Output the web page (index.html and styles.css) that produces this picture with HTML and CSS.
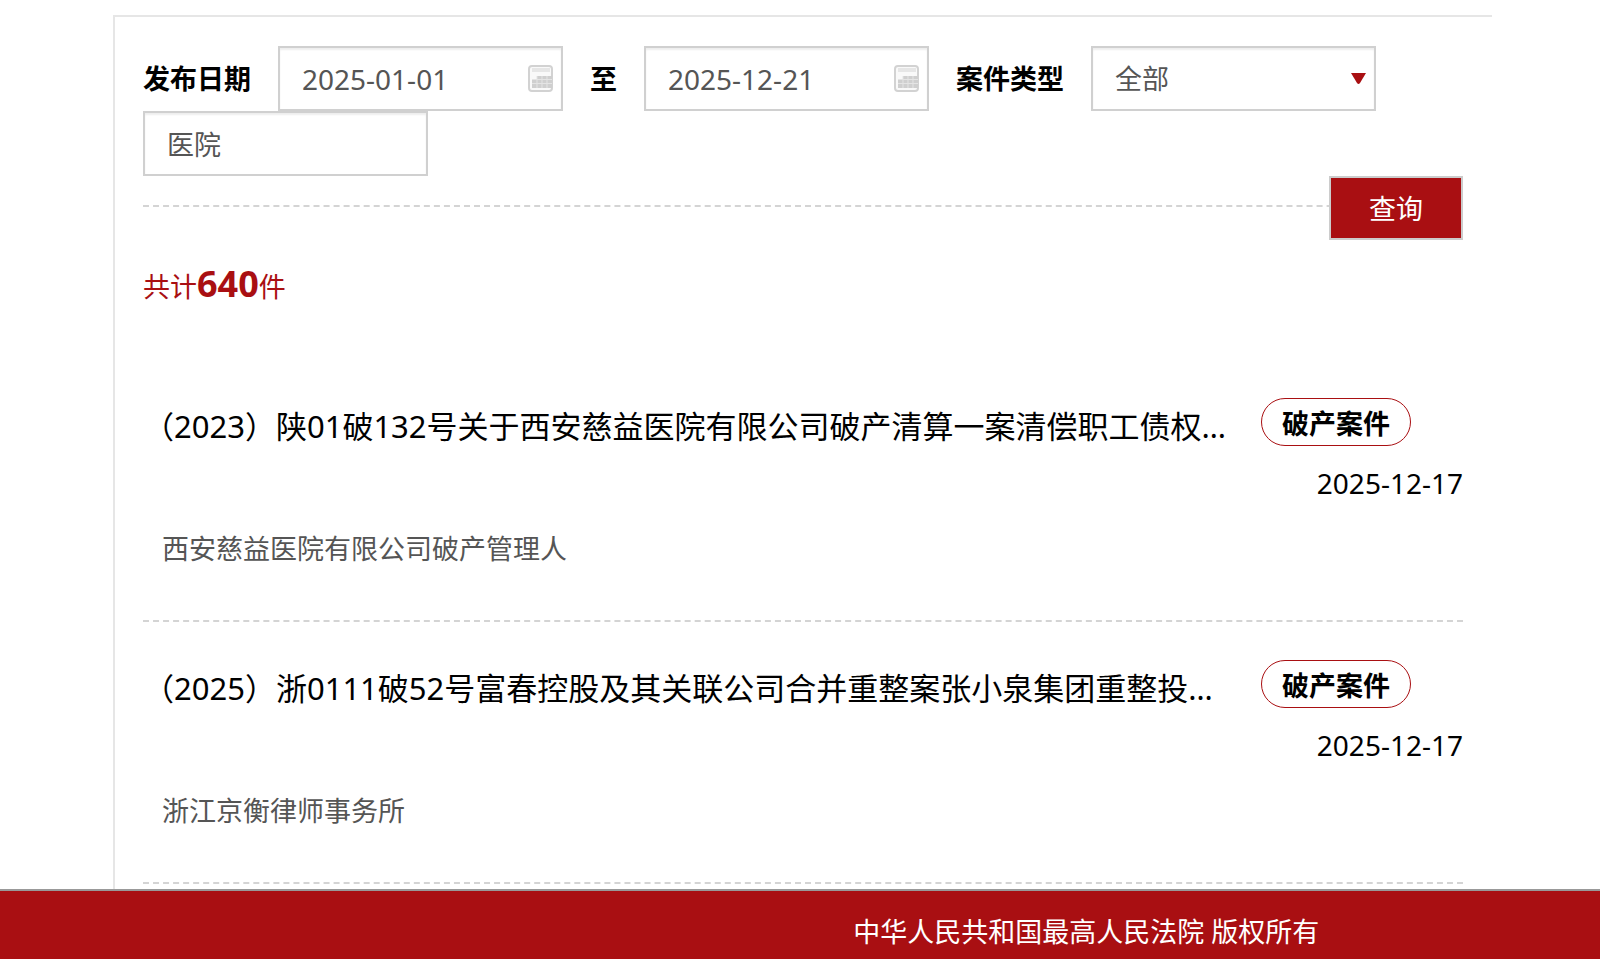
FILE: index.html
```html
<!DOCTYPE html>
<html lang="zh-CN">
<head>
<meta charset="utf-8">
<title>公开案件</title>
<link rel="stylesheet" href="styles.css">
</head>
<body>
<main class="panel">
  <form class="filters">
    <label class="label" for="from">发布日期</label>
    <div class="field">
      <input class="control date-control" id="from" type="text" value="2025-01-01">
      <svg class="calendar" viewBox="0 0 25 27" aria-hidden="true">
        <rect x="1" y="1" width="23" height="25" rx="3" fill="#f9f9f9" stroke="#d2d2d2" stroke-width="2"/>
        <path d="M4 3H22V7H4Z" fill="#e6e6e6"/>
        <path d="M9 11H24V23H4V15H9Z" fill="#cfcfcf"/>
        <path d="M4 14.500H24M4 18.500H24M9 11V23M14 11V23M19 11V23" stroke="#e4e4e4"/>
      </svg>
    </div>
    <label class="label" for="to">至</label>
    <div class="field">
      <input class="control date-control" id="to" type="text" value="2025-12-21">
      <svg class="calendar" viewBox="0 0 25 27" aria-hidden="true">
        <rect x="1" y="1" width="23" height="25" rx="3" fill="#f9f9f9" stroke="#d2d2d2" stroke-width="2"/>
        <path d="M4 3H22V7H4Z" fill="#e6e6e6"/>
        <path d="M9 11H24V23H4V15H9Z" fill="#cfcfcf"/>
        <path d="M4 14.500H24M4 18.500H24M9 11V23M14 11V23M19 11V23" stroke="#e4e4e4"/>
      </svg>
    </div>
    <label class="label" for="type">案件类型</label>
    <div class="field">
      <select class="control" id="type"><option>全部</option></select>
      <svg class="arrow" viewBox="0 0 15 12" aria-hidden="true"><path d="M0 0H15L9 10Q7.500 12 6 10Z" fill="#a90f12"/></svg>
    </div>
    <div class="field">
      <input class="control" type="text" value="医院" aria-label="关键字">
    </div>
    <button class="search" type="submit">查询</button>
  </form>

  <p class="total">共计<strong class="count">640</strong>件</p>

  <ul class="list">
    <li class="item">
      <div class="head">
        <a class="title" href="#">（2023）陕01破132号关于西安慈益医院有限公司破产清算一案清偿职工债权…</a>
        <span class="badge">破产案件</span>
      </div>
      <time class="date">2025-12-17</time>
      <p class="agency">西安慈益医院有限公司破产管理人</p>
    </li>
    <li class="item">
      <div class="head">
        <a class="title" href="#">（2025）浙0111破52号富春控股及其关联公司合并重整案张小泉集团重整投…</a>
        <span class="badge">破产案件</span>
      </div>
      <time class="date">2025-12-17</time>
      <p class="agency">浙江京衡律师事务所</p>
    </li>
  </ul>
</main>
<footer class="footer">
  <p class="copyright">中华人民共和国最高人民法院 版权所有</p>
</footer>
</body>
</html>
```

FILE: styles.css
```css
* {
  box-sizing: border-box;
}

body {
  margin: 0;
  min-height: 100vh;
  display: flex;
  flex-direction: column;
  background: #fff;
  color: #000;
  font: 27px/40px "Noto Sans", "Noto Sans CJK SC", sans-serif;
}

p,
ul {
  margin: 0;
  padding: 0;
}

.panel {
  flex: 1;
  margin: 15px 108px 0 113px;
  padding: 29px 29px 0 28px;
  border-top: 2px solid #e6e6e6;
  border-left: 2px solid #e6e6e6;
}

.filters {
  position: relative;
  display: flex;
  flex-wrap: wrap;
  align-items: center;
  column-gap: 27px;
  padding-bottom: 29px;
  border-bottom: 2px dashed #d4d4d4;
}

.label {
  font-weight: 700;
}

.field {
  position: relative;
  width: 285px;
}

.control {
  display: block;
  width: 100%;
  height: 65px;
  padding: 0 22px;
  border: 2px solid #d0d0d0;
  border-radius: 0;
  background: #fff;
  box-shadow: inset 0 2px 2px #eee;
  color: #555;
  font: inherit;
  appearance: none;
  outline: 0;
}

.date-control {
  font-size: 28px;
}

.calendar {
  position: absolute;
  top: 19px;
  right: 10px;
  width: 25px;
  height: 27px;
}

.arrow {
  position: absolute;
  top: 27px;
  right: 10px;
  width: 15px;
  height: 12px;
  pointer-events: none;
}

.search {
  position: absolute;
  right: 0;
  bottom: -35px;
  width: 134px;
  height: 64px;
  padding: 2px 0 0;
  border: 2px solid #ccc;
  background: #a90f12;
  color: #fff;
  font: inherit;
}

.total {
  padding-top: 57px;
  color: #a90f12;
}

.count {
  font-size: 36px;
}

.list {
  padding-top: 53px;
  list-style: none;
}

.item {
  height: 262px;
  padding-top: 38px;
  border-bottom: 2px dashed #d4d4d4;
}

.head {
  display: flex;
  justify-content: space-between;
  align-items: flex-start;
  padding-right: 52px;
}

.title {
  padding-top: 8px;
  color: #000;
  font-size: 31px;
  text-decoration: none;
  white-space: nowrap;
}

.badge {
  height: 48px;
  padding: 4px 20px;
  border: 1px solid #a90f12;
  border-radius: 24px;
  font-weight: 700;
  line-height: 42px;
}

.date {
  display: block;
  padding-top: 17px;
  font-size: 28px;
  text-align: right;
}

.agency {
  padding: 26px 0 0 19px;
  color: #555;
}

.footer {
  display: grid;
  grid-template-columns: 8fr 7fr;
  height: 70px;
  padding-top: 21px;
  border-top: 2px solid #999;
  background: #a90f12;
  color: #fff;
}

.copyright {
  grid-column: 2;
}
```
